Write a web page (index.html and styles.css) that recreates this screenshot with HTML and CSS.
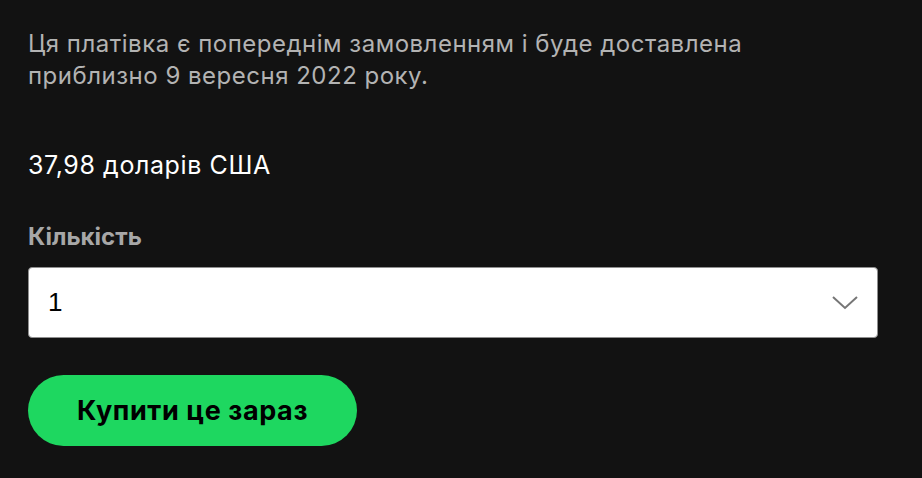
FILE: index.html
```html
<html>
  <head>
    <title>Купити</title>
    <link rel="stylesheet" href="styles.css">
  </head>
  <body>
    <div id="content">
      <p class="note">Ця платівка є попереднім замовленням і буде доставлена<br>приблизно 9 вересня 2022 року.</p>
      <p class="price">37,98 доларів США</p>
      <label class="label" for="qty">Кількість</label>
      <div class="select">
        <span class="select-value" id="qty">1</span>
        <svg class="chevron" width="26" height="14" viewBox="0 0 26 14"><path d="M1 1 L13 12 L25 1" fill="none" stroke="#767676" stroke-width="2"/></svg>
      </div>
      <button class="buy">Купити це зараз</button>
    </div>
  </body>
</html>
```

FILE: styles.css
```css
body {
    margin: 0;
    background: #121212;
    font-family: Inter, "Liberation Sans", sans-serif;
}
#content {
    padding: 28px 44px 0 28px;
    display: flex;
    flex-direction: column;
    align-items: flex-start;
}
.note {
    margin: 0;
    color: #b3b3b3;
    font-size: 24px;
    letter-spacing: 0.5px;
    line-height: 32px;
}
.price {
    margin: 57px 0 0 0;
    color: #fff;
    font-size: 25px;
    letter-spacing: 0.6px;
    line-height: 32px;
}
.label {
    margin-top: 41px;
    color: #a7a7a7;
    font-weight: bold;
    font-size: 24px;
    line-height: 30px;
}
.select {
    margin-top: 15px;
    box-sizing: border-box;
    width: 850px;
    height: 71px;
    background: #fff;
    border: 1px solid #8f8f8f;
    border-radius: 4px;
    display: flex;
    align-items: center;
    justify-content: space-between;
    padding: 0 19px 0 19px;
}
.select-value {
    font-family: "Liberation Sans", Arial, sans-serif;
    font-size: 26px;
    color: #000;
}
.buy {
    margin-top: 37px;
    width: 329px;
    height: 71px;
    border: none;
    border-radius: 36px;
    background: #1ed760;
    color: #000;
    font-family: Inter, "Liberation Sans", sans-serif;
    font-weight: bold;
    font-size: 27px;
    letter-spacing: 0.6px;
}
```
